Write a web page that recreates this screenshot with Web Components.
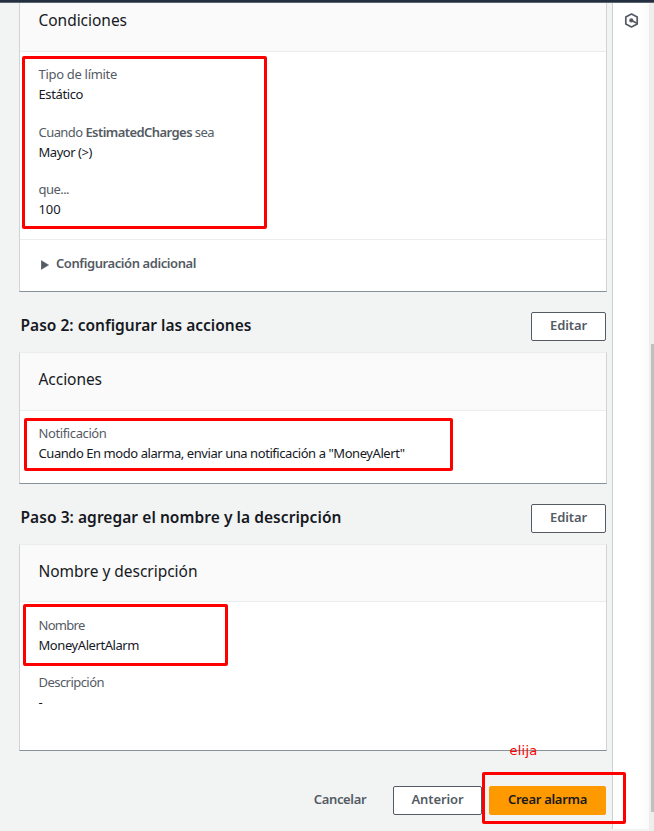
<!DOCTYPE html>
<html lang="es">
<head>
<meta charset="utf-8">
<title>Crear alarma</title>
<style>
html,body{margin:0;height:831px;overflow:hidden;background:#f2f3f3;font-family:"Noto Sans","Open Sans",sans-serif;font-size:13px;color:#16191f}
</style>
</head>
<body>
<alarm-page></alarm-page>
<script>
const define = (name, html, setup) => customElements.define(name, class extends HTMLElement {
  connectedCallback() {
    if (this.shadowRoot) return;
    this.attachShadow({mode: 'open'}).innerHTML = html;
    if (setup) setup(this, this.shadowRoot);
  }
});

// A single line of text, tracked so that it occupies the width given in "w".
define('fit-text', `<style>:host{display:inline-block;white-space:nowrap}span{display:inline-block}::slotted(b){font-weight:600}</style><span><slot></slot></span>`,
  (el, root) => {
    const span = root.querySelector('span');
    const n = el.textContent.length;
    const gap = (Number(el.getAttribute('w')) - span.getBoundingClientRect().width) / n;
    el.style.letterSpacing = gap.toFixed(3) + 'px';
  });

define('ui-panel', `<style>
:host{display:flex;flex-direction:column;box-sizing:border-box;width:588px;background:#fff;border:1px solid #d0d4d4;border-top-color:#eaeded;border-bottom-color:#879196}
header{box-sizing:border-box;height:var(--head,58px);padding-top:var(--head-pad,13px);padding-left:18.5px;background:#fafafa;border-bottom:1px solid #eaeded;font-size:15.5px;line-height:26px}
main{padding:var(--main-pad,12px) 0 0 18.5px;flex:1}
</style><header><slot name="title"></slot></header><main><slot></slot></main><slot name="footer"></slot>`);

define('ui-field', `<style>
:host{display:block;line-height:20px;height:40px;margin-bottom:var(--gap,17.5px)}
div{height:20px}.l{color:#545b64}
</style><div class="l"><slot name="label"></slot></div><div><slot></slot></div>`);

define('ui-button', `<style>
:host{display:flex;box-sizing:border-box;height:29px;justify-content:center;border:1px solid #545b64;border-radius:2px;background:#fff;color:#545b64;font-weight:600;line-height:25px}
:host([kind=link]){border-color:transparent;background:none}
:host([kind=primary]){border-color:#ff9900;background:#ff9900;color:#16191f}
</style><slot></slot>`);

define('step-heading', `<style>
:host{display:flex;justify-content:space-between;align-items:flex-start;height:40px;padding-top:20px;width:587px}
.t{font-weight:650;font-size:15.5px;line-height:26px;padding-left:1.5px}
ui-button{width:75px}
</style><div class="t"><slot></slot></div><ui-button><fit-text w="37">Editar</fit-text></ui-button>`);

define('ui-expander', `<style>
:host{display:flex;align-items:center;gap:7px;box-sizing:border-box;height:52px;padding:0 0 5px 21px;border-top:1px solid #eaeded;color:#545b64;font-weight:600}
svg{margin-top:4px;display:block}
</style><svg width="8" height="10" viewBox="0 0 8 10"><path d="M.2.6 7.6 5 .2 9.4Z" fill="#545b64" stroke="#545b64" stroke-width=".5"/></svg><slot></slot>`);

// Red annotation frame laid over the content.
define('red-frame', `<style>:host{position:absolute;box-sizing:border-box;border:3px solid #f00;border-radius:2px}</style>`,
  el => {
    const [x, y, w, h] = el.getAttribute('box').split(' ');
    Object.assign(el.style, {left: x + 'px', top: y + 'px', width: w + 'px', height: h + 'px'});
  });

define('side-rail', `<style>
:host{display:flex;justify-content:center;box-sizing:border-box;width:37px;height:826px;border-left:1px solid #cdd1d1;background:linear-gradient(90deg,#fff 70%,#fafafa)}
svg{margin-top:10px}
</style><svg width="15" height="15" viewBox="0 0 15 15"><g fill="none" stroke="#545b64" stroke-width="1.7"><path d="M7.5 1 13.2 4.1V10.9L7.5 14 1.8 10.9V4.1Z" stroke-linejoin="round"/><path d="M7.5 7.5 13 10.2"/></g><circle cx="7.3" cy="7.4" r="2.1" fill="#545b64"/></svg>`);

define('scroll-track', `<style>
:host{display:block;box-sizing:border-box;width:5px;height:828px;padding:341px 0 0 2px;background:#eee}
div{height:468px;background:#c0c0c0}
</style><div></div>`);

define('alarm-page', `<style>
:host{display:block;position:relative;width:654px;height:831px;overflow:hidden}
.bar{box-sizing:border-box;height:3px;background:#232f3e;border-bottom:1px solid #5a6470}
.body{display:flex;height:828px}
.content{width:593px;padding-left:19px}
.first{height:289px;border-top:0;--head:49px;--head-pad:4px}
.second{height:132px}.third{height:207px;--head:57px;--gap:17px;--main-pad:13px}
.actions{display:flex;margin-top:35px;width:587px;justify-content:flex-end}
.note{position:absolute;left:509.5px;top:740px;color:#f00;font:13px/22px "DejaVu Sans",sans-serif}
</style>
<div class="bar"></div>
<div class="body">
 <div class="content">
  <ui-panel class="first">
   <fit-text slot="title" w="88.5">Condiciones</fit-text>
   <ui-field><fit-text slot="label" w="78.5">Tipo de límite</fit-text><fit-text w="44.5">Estático</fit-text></ui-field>
   <ui-field><fit-text slot="label" w="175.5">Cuando <b>EstimatedCharges</b> sea</fit-text><fit-text w="53.5">Mayor (&gt;)</fit-text></ui-field>
   <ui-field><fit-text slot="label" w="30.5">que...</fit-text><fit-text w="22">100</fit-text></ui-field>
   <ui-expander slot="footer"><fit-text w="140">Configuración adicional</fit-text></ui-expander>
  </ui-panel>
  <step-heading><fit-text w="231">Paso 2: configurar las acciones</fit-text></step-heading>
  <ui-panel class="second">
   <fit-text slot="title" w="63.5">Acciones</fit-text>
   <ui-field><fit-text slot="label" w="68">Notificación</fit-text><fit-text w="366">Cuando En modo alarma, enviar una notificación a "MoneyAlert"</fit-text></ui-field>
  </ui-panel>
  <step-heading><fit-text w="321">Paso 3: agregar el nombre y la descripción</fit-text></step-heading>
  <ui-panel class="third">
   <fit-text slot="title" w="159">Nombre y descripción</fit-text>
   <ui-field><fit-text slot="label" w="46">Nombre</fit-text><fit-text w="100.5">MoneyAlertAlarm</fit-text></ui-field>
   <ui-field><fit-text slot="label" w="65.5">Descripción</fit-text><fit-text w="5">-</fit-text></ui-field>
  </ui-panel>
  <div class="actions">
   <ui-button kind="link" style="width:94px;margin-right:6px"><fit-text w="52.5">Cancelar</fit-text></ui-button>
   <ui-button style="width:89px;margin-right:7px"><fit-text w="52">Anterior</fit-text></ui-button>
   <ui-button kind="primary" style="width:117px"><fit-text w="79">Crear alarma</fit-text></ui-button>
  </div>
 </div>
 <side-rail></side-rail>
 <scroll-track></scroll-track>
</div>
<red-frame box="22 56 245 173"></red-frame>
<red-frame box="24 418 429 53"></red-frame>
<red-frame box="23 604 205 62"></red-frame>
<red-frame box="482 772 144 52"></red-frame>
<fit-text class="note" w="28">elija</fit-text>`);
</script>
</body>
</html>
